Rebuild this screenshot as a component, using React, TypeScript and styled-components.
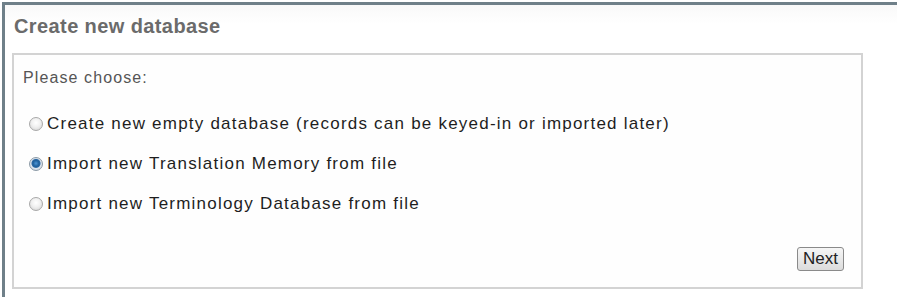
import React, { useState } from 'react'
import styled, { createGlobalStyle } from 'styled-components'

const GlobalStyle = createGlobalStyle`
  html, body {
    margin: 0;
    padding: 0;
    background: #ffffff;
    font-family: Arial, "Liberation Sans", sans-serif;
  }
`

const options = [
  { id: 'empty', label: 'Create new empty database (records can be keyed-in or imported later)' },
  { id: 'tm', label: 'Import new Translation Memory from file' },
  { id: 'term', label: 'Import new Terminology Database from file' },
]

export default function App() {
  const [choice, setChoice] = useState('tm')

  return (
    <>
      <GlobalStyle />
      <Frame>
        <Header>
          <Title>Create new database</Title>
        </Header>
        <Panel>
          <Prompt>Please choose:</Prompt>
          <OptionList>
            {options.map((o) => (
              <OptionRow key={o.id}>
                <Radio
                  type="radio"
                  name="dbtype"
                  checked={choice === o.id}
                  onChange={() => setChoice(o.id)}
                />
                <span>{o.label}</span>
              </OptionRow>
            ))}
          </OptionList>
          <Footer>
            <NextButton>Next</NextButton>
          </Footer>
        </Panel>
      </Frame>
    </>
  )
}

const Frame = styled.div`
  margin: 2px 3px 0 2px;
  height: 295px;
  box-sizing: border-box;
  border-left: 3px solid #6f8089;
  border-top: 3px solid #6f8089;
  display: flex;
  flex-direction: column;
`

const Header = styled.div`
  height: 48px;
  box-sizing: border-box;
  padding: 10px 0 0 9px;
  background: linear-gradient(#f9f9f9, #ffffff 40%);
`

const Title = styled.h1`
  margin: 0;
  font-size: 20px;
  letter-spacing: 0.4px;
  font-weight: bold;
  color: #6b6b6b;
`

const Panel = styled.div`
  margin-left: 7px;
  width: 851px;
  height: 236px;
  box-sizing: border-box;
  border: 2px solid #d3d3d3;
  background: #fefefe;
  padding: 14px 0 0 9px;
  display: flex;
  flex-direction: column;
`

const Prompt = styled.div`
  font-size: 16px;
  letter-spacing: 1.1px;
  color: #555555;
`

const OptionList = styled.div`
  display: flex;
  flex-direction: column;
  gap: 20px;
  margin-top: 27px;
  padding-left: 6px;
`

const OptionRow = styled.label`
  display: flex;
  align-items: center;
  gap: 4px;
  font-size: 17px;
  letter-spacing: 1.22px;
  color: #1e1e1e;
`

const Radio = styled.input`
  appearance: none;
  margin: 0;
  width: 14px;
  height: 14px;
  border-radius: 50%;
  border: 1px solid #a8a8a8;
  box-sizing: border-box;
  background: radial-gradient(circle at 50% 40%, #ffffff 0, #f0f0f0 45%, #cfcfcf 100%);

  &:checked {
    border-color: #8c9aa6;
    background: radial-gradient(circle at 50% 45%, #4d96d6 0, #1f5f9a 3px, #2c6aa5 4px, #dfe6ee 5px, #c7ced6 100%);
  }
`

const Footer = styled.div`
  margin-top: auto;
  display: flex;
  justify-content: flex-end;
  padding: 0 17px 16px 0;
`

const NextButton = styled.button`
  font-family: Arial, "Liberation Sans", sans-serif;
  font-size: 17px;
  color: #222222;
  padding: 1px 5px;
  border: 1px solid #8a8a8a;
  border-radius: 3px;
  background: linear-gradient(#f6f6f6, #dcdcdc);
`
